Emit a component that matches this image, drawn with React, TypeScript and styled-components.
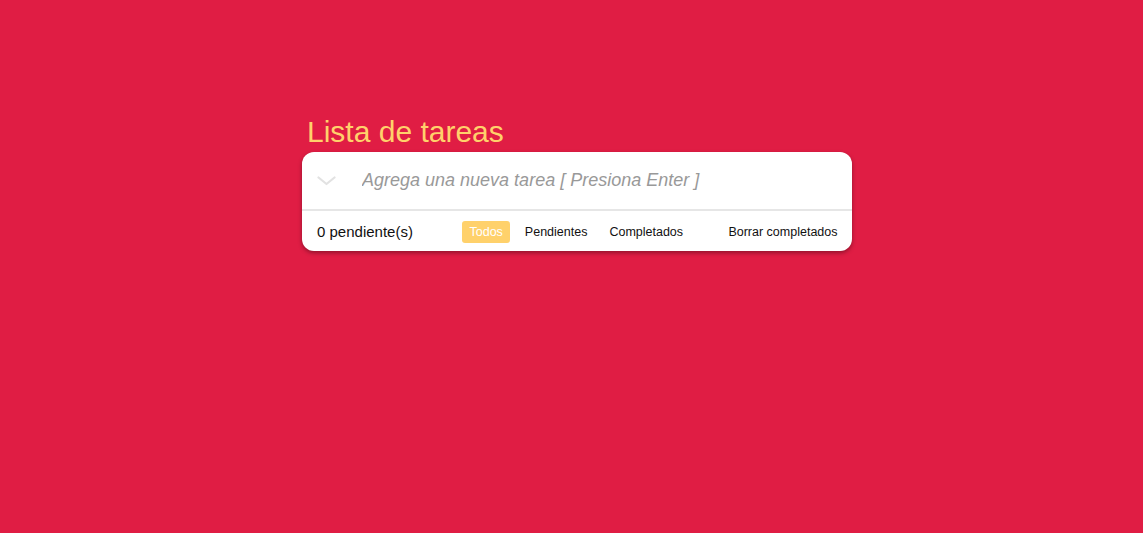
import React from "react";
import styled, { createGlobalStyle } from "styled-components";

const Global = createGlobalStyle`
  html, body { margin: 0; padding: 0; }
  body {
    background: #e01d44;
    font-family: "Liberation Sans", Arial, sans-serif;
    min-height: 533px;
  }
`;

const Page = styled.div`
  width: 550px;
  padding: 115px 0 0 11px;
  margin: 0 auto;
`;

const Title = styled.h1`
  margin: 0 0 3px 5px;
  font-size: 30px;
  line-height: 34px;
  font-weight: 400;
  color: #ffd16b;
`;

const Card = styled.div`
  background: #fff;
  border-radius: 12px;
  box-shadow: 0 2px 4px rgba(0, 0, 0, 0.35);
  overflow: hidden;
`;

const InputRow = styled.div`
  display: flex;
  align-items: center;
  height: 57px;
  border-bottom: 2px solid #e6e6e6;
`;

const Toggle = styled.div`
  width: 60px;
  display: flex;
  justify-content: flex-start;
  padding-left: 15px;
  box-sizing: border-box;
`;

const TaskInput = styled.input`
  flex: 1;
  border: none;
  outline: none;
  font-family: "Liberation Sans", Arial, sans-serif;
  font-size: 18px;
  font-style: italic;
  color: #333;
  padding: 0;
  &::placeholder {
    color: #999;
    font-style: italic;
  }
`;

const Footer = styled.div`
  display: flex;
  align-items: center;
  height: 40px;
  padding: 1px 7px 0 15px;
  box-sizing: border-box;
`;

const Count = styled.span`
  width: 145px;
  font-size: 15px;
  color: #111;
`;

const Filters = styled.div`
  display: flex;
  gap: 7px;
`;

const FilterButton = styled.button<{ $active?: boolean }>`
  border: none;
  border-radius: 3px;
  height: 22px;
  padding: 0 7.5px;
  font-family: "Liberation Sans", Arial, sans-serif;
  font-size: 12.5px;
  cursor: pointer;
  background: ${(p) => (p.$active ? "#ffd16b" : "transparent")};
  color: ${(p) => (p.$active ? "#fff" : "#111")};
`;

const ClearButton = styled(FilterButton)`
  margin-left: auto;
`;

export default function App() {
  return (
    <>
      <Global />
      <Page>
        <Title>Lista de tareas</Title>
        <Card>
          <InputRow>
            <Toggle>
              <svg width="19" height="10" viewBox="0 0 19 10" fill="none">
                <path d="M1.5 1.5 L9.5 8 L17.5 1.5" stroke="#e2e2e2" strokeWidth="2.2" strokeLinecap="round" strokeLinejoin="round" />
              </svg>
            </Toggle>
            <TaskInput autoFocus placeholder="Agrega una nueva tarea [ Presiona Enter ]" />
          </InputRow>
          <Footer>
            <Count>0 pendiente(s)</Count>
            <Filters>
              <FilterButton $active>Todos</FilterButton>
              <FilterButton>Pendientes</FilterButton>
              <FilterButton>Completados</FilterButton>
            </Filters>
            <ClearButton>Borrar completados</ClearButton>
          </Footer>
        </Card>
      </Page>
    </>
  );
}
